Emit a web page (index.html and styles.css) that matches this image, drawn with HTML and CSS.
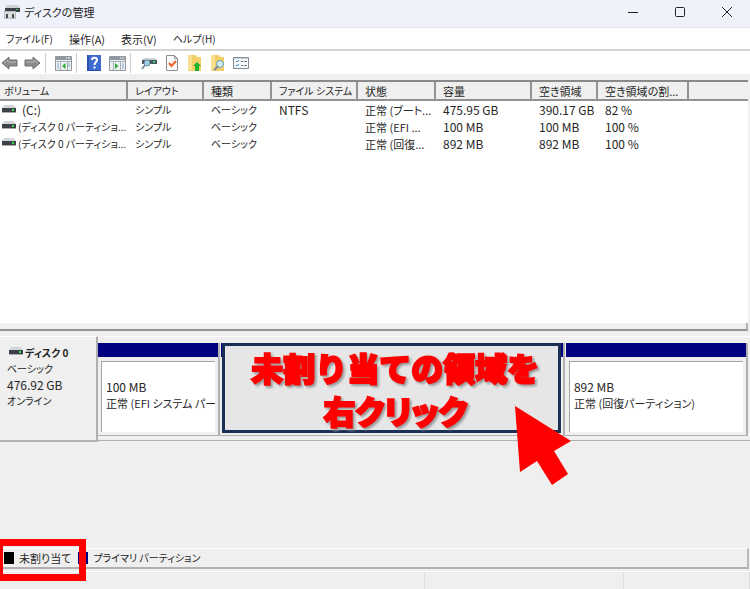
FILE: index.html
```html
<!DOCTYPE html>
<html lang="ja">
<head>
<meta charset="utf-8">
<title>ディスクの管理</title>
<link rel="stylesheet" href="styles.css">
</head>
<body>
<svg width="0" height="0" class="defs" aria-hidden="true">
  <symbol id="drive" viewBox="0 0 14 8">
    <path d="M2 0h10l2 3H0z" fill="#d4d7d9"/>
    <path d="M0 3h14v4H0z" fill="#3b4146"/>
    <path d="M0 7h14v1H0z" fill="#a9adb0"/>
    <path d="M10 4h2v2h-2z" fill="#35e04a"/>
  </symbol>
</svg>

<header class="titlebar">
  <svg class="app-icon" width="16" height="16" viewBox="0 0 16 16" aria-hidden="true">
    <path d="M3 1h11l2 3H1z" fill="#cfd2d4"/><path d="M1 4h15v4H1z" fill="#3b4146"/>
    <path d="M12 5h2v1h-2z" fill="#39d353"/>
    <path d="M0 7h12v8H0z" fill="#b9bbbd"/><path d="M1 8h10v6H1z" fill="#dcddde"/>
    <path d="M2 10h2v4H2zM8 10h2v4H8z" fill="#4a4d50"/>
  </svg>
  <h1>ディスクの管理</h1>
  <div class="window-buttons">
    <button type="button" aria-label="最小化"><svg width="12" height="12" viewBox="0 0 12 12"><path d="M1 6.500h10" /></svg></button>
    <button type="button" aria-label="最大化"><svg width="12" height="12" viewBox="0 0 12 12"><rect x="1.500" y="1.500" width="9" height="9" rx="1"/></svg></button>
    <button type="button" aria-label="閉じる"><svg width="12" height="12" viewBox="0 0 12 12"><path d="M1 1l10 10M11 1L1 11"/></svg></button>
  </div>
</header>

<nav class="menubar">
  <button type="button" class="kana">ファイル(F)</button>
  <button type="button">操作(A)</button>
  <button type="button">表示(V)</button>
  <button type="button" class="kana">ヘルプ(H)</button>
</nav>

<div class="toolbar">
  <div class="group">
    <button type="button" aria-label="戻る"><svg width="17" height="16" viewBox="0 0 17 16"><path d="M1 8l7-6v3h8v6H8v3z" fill="#8b8b8b" stroke="#6f6f6f"/><path d="M3 8l4-3v2h8" fill="none" stroke="#b5b5b5"/></svg></button>
    <button type="button" aria-label="進む"><svg width="17" height="16" viewBox="0 0 17 16"><path d="M16 8L9 2v3H1v6h8v3z" fill="#8b8b8b" stroke="#6f6f6f"/><path d="M14 8l-4-3v2H2" fill="none" stroke="#b5b5b5"/></svg></button>
  </div>
  <div class="group tree">
    <button type="button" aria-label="コンソール ツリーの表示"><svg width="17" height="16" viewBox="0 0 17 16"><path d="M.5 1.500h16v14H.5z" fill="#eef0f2" stroke="#92979c"/><path d="M1 2h15v3H1z" fill="#8f98a2"/><path d="M11 3h1M13 3h2" stroke="#fff"/><path d="M1 6.500h15M5.500 7v8M12.500 7v8" stroke="#a8afb6"/><path d="M2 9h2M2 11h2M2 13h2M13 9h2M13 11h2" stroke="#7faad0"/><path d="M10.500 8v6L7 11z" fill="#2eae36"/></svg></button>
  </div>
  <div class="group help">
    <button type="button" aria-label="ヘルプ"><svg width="14" height="16" viewBox="0 0 14 16"><path d="M0 0h14v16H0z" fill="#294fae"/><path d="M2 0h12v15H2z" fill="#3f6bd0"/><path d="M5 5c0-3 5-3 5 0 0 2-2.500 2-2.500 5M7.500 11.500v2" fill="none" stroke="#fff" stroke-width="2"/></svg></button>
    <button type="button" aria-label="操作ウィンドウの表示"><svg width="17" height="16" viewBox="0 0 17 16"><path d="M.5 1.500h16v14H.5z" fill="#eef0f2" stroke="#92979c"/><path d="M1 2h15v3H1z" fill="#8f98a2"/><path d="M11 3h1M13 3h2" stroke="#fff"/><path d="M1 6.500h15M4.500 7v8M11.500 7v8" stroke="#a8afb6"/><path d="M13 9h2M13 11h2M13 13h2" stroke="#7faad0"/><path d="M6 8v6l3.500-3z" fill="#2eae36"/></svg></button>
  </div>
  <div class="group actions">
    <button type="button" aria-label="最新の情報に更新"><svg width="16" height="16" viewBox="0 0 16 16"><path d="M3 3h11l2 2H1z" fill="#cbd0d3"/><path d="M1 5h15v4H1z" fill="#4a5560"/><path d="M12 6h2v2h-2z" fill="#36d867"/><circle cx="6" cy="8" r="3" fill="#9fd0e4" stroke="#62899b"/><path d="M4 10l-3 4" stroke="#8093a0" stroke-width="2"/></svg></button>
    <button type="button" aria-label="プロパティ"><svg width="14" height="16" viewBox="0 0 14 16"><path d="M1.500.5h8l3 3v12h-11z" fill="#fafafa" stroke="#8c8f92"/><path d="M9.500.5v3h3" fill="none" stroke="#8c8f92"/><path d="M4 8l2.500 3L11 6" fill="none" stroke="#ef622b" stroke-width="2"/></svg></button>
    <button type="button" aria-label="上へ"><svg width="15" height="16" viewBox="0 0 15 16"><path d="M1 0h8l1 2h4v14H1z" fill="#f3cf68"/><path d="M1 0h4v15H1z" fill="#f9df91"/><path d="M10 7l4 4h-2v5H8v-5H6z" fill="#20b22e"/></svg></button>
    <button type="button" aria-label="検索"><svg width="15" height="16" viewBox="0 0 15 16"><path d="M1 0h8l1 2h4v14H1z" fill="#f3cf68"/><path d="M1 0h4v15H1z" fill="#f9df91"/><circle cx="10" cy="9" r="3.500" fill="#d3edf7" stroke="#6c9cb4"/><path d="M8 11l-4 4" stroke="#7d8d97" stroke-width="2"/></svg></button>
    <button type="button" aria-label="表示設定"><svg width="16" height="16" viewBox="0 0 16 16"><path d="M.5 2.500h15v11H.5z" fill="#f7f8f9" stroke="#7f8b96"/><path d="M1 3h14" stroke="#929da7"/><path d="M3 6l1 1 2-2M3 10l1 1 2-2" fill="none" stroke="#288bd8"/><path d="M8 6.500h2M11 6.500h3M8 10.500h2M11 10.500h3" stroke="#6c7882"/></svg></button>
  </div>
</div>

<main>
  <section class="volumes">
    <table>
      <colgroup>
        <col class="c-volume"><col class="c-layout"><col class="c-type"><col class="c-fs"><col class="c-status"><col class="c-capacity"><col class="c-free"><col class="c-percent"><col>
      </colgroup>
      <thead>
        <tr><th class="kana">ボリューム</th><th class="kana">レイアウト</th><th>種類</th><th class="kana">ファイル システム</th><th>状態</th><th>容量</th><th>空き領域</th><th>空き領域の割...</th><th></th></tr>
      </thead>
      <tbody>
        <tr><td><svg class="drive spaced"><use href="#drive"/></svg>(C:)</td><td class="kana">シンプル</td><td class="kana">ベーシック</td><td>NTFS</td><td class="mixed">正常 (ブート...</td><td>475.95 GB</td><td>390.17 GB</td><td>82 %</td><td></td></tr>
        <tr><td class="kana"><svg class="drive"><use href="#drive"/></svg>(ディスク 0 パーティショ...</td><td class="kana">シンプル</td><td class="kana">ベーシック</td><td></td><td class="mixed">正常 (EFI ...</td><td>100 MB</td><td>100 MB</td><td>100 %</td><td></td></tr>
        <tr><td class="kana"><svg class="drive"><use href="#drive"/></svg>(ディスク 0 パーティショ...</td><td class="kana">シンプル</td><td class="kana">ベーシック</td><td></td><td class="mixed">正常 (回復...</td><td>892 MB</td><td>892 MB</td><td>100 %</td><td></td></tr>
      </tbody>
    </table>
  </section>
  <div class="splitter"></div>
  <section class="disks">
    <div class="disk">
      <div class="disk-label">
        <h2 class="kana"><svg class="drive"><use href="#drive"/></svg>ディスク 0</h2>
        <p class="kana">ベーシック</p><p>476.92 GB</p><p class="kana">オンライン</p>
      </div>
      <div class="partitions">
        <div class="partition efi"><div class="bar"></div><div class="info"><p>100 MB</p><p class="mixed">正常 (EFI システム パーティション)</p></div></div>
        <div class="partition primary"><div class="bar"></div><div class="info"></div>
          <div class="callout"><p>未割り当ての領域を</p><p class="tight">右クリック</p></div>
          <svg class="arrow" width="56" height="80" viewBox="0 0 56 80" aria-hidden="true"><path d="M0 0l56 35-17 10 14 23-16 11-15-24-17 11z" fill="#f00"/></svg>
        </div>
        <div class="partition recovery"><div class="bar"></div><div class="info"><p>892 MB</p><p class="mixed">正常 (回復パーティション)</p></div></div>
      </div>
    </div>
  </section>
</main>

<div class="legend">
  <span class="key mixed"><i class="swatch unallocated"></i>未割り当て</span>
  <span class="key kana"><i class="swatch"></i>プライマリ パーティション</span>
  <div class="highlight"></div>
</div>
<footer class="statusbar"><div></div><div></div><div></div></footer>
</body>
</html>
```
FILE: styles.css
```css
* { box-sizing: border-box; }

body {
  margin: 0;
  min-height: 100vh;
  display: flex;
  flex-direction: column;
  background: #efefef;
  color: #262626;
  font: 12px/16px "Noto Sans CJK JP", sans-serif;
  font-feature-settings: "palt";
  overflow: hidden;
}

h1, h2, p { margin: 0; font-size: inherit; font-weight: 400; }
button { border: 0; padding: 0; background: none; color: inherit; font: inherit; font-feature-settings: inherit; }
svg { display: block; }
.defs { position: absolute; }

.mixed, .titlebar h1, .menubar button, th { font-size: 11px; }
.kana, .menubar .kana, th.kana { font-size: 10px; }

.titlebar {
  display: flex;
  align-items: center;
  height: 28px;
  padding: 0 0 4px 4px;
  gap: 4px;
  background: #eff2fa;
  border-bottom: 1px solid #e3e5ea;
}
.titlebar h1 { flex: 1; }
.window-buttons { display: flex; }
.window-buttons button { width: 47px; height: 24px; display: grid; place-items: center; }
.window-buttons svg { fill: none; stroke: #222; }

.menubar {
  display: flex;
  gap: 16px;
  height: 23px;
  padding: 0 6px;
  background: #fff;
  border-bottom: 2px solid #d4d4d4;
}

.toolbar {
  display: flex;
  align-items: center;
  height: 23px;
  background: #fff;
}
.group { display: flex; align-items: center; height: 20px; padding: 0 7px; gap: 7px; border-left: 1px solid #ccc; }
.group:first-child { border: 0; padding: 0 4px 0 1px; gap: 6px; }
.tree { padding: 0 4px 0 9px; }
.help { padding: 0 4px 0 10px; gap: 8px; }
.actions { padding-left: 10px; gap: 8px; }

main { flex: 1; display: flex; flex-direction: column; padding-top: 6px; }

.volumes {
  flex: 245 1 0px;
  background: #fff;
  border-top: 2px solid #8a8a8a;
  margin-right: 2px;
}
table { width: 100%; table-layout: fixed; border-collapse: separate; border-spacing: 0; }
th, td { padding: 0 0 0 7px; height: 17px; text-align: left; font-weight: 400; white-space: nowrap; }
th:first-child { padding-left: 4px; }
td:first-child { padding-left: 2px; }
th { height: 19px; background: #efefef; border-right: 2px solid #929292; border-bottom: 2px solid #929292; }
th:last-child { border-right: 0; }
.c-volume { width: 128px; }
.c-layout { width: 76px; }
.c-type { width: 68px; }
.c-fs { width: 86px; }
.c-status { width: 78px; }
.c-capacity { width: 96px; }
.c-free { width: 66px; }
.c-percent { width: 91px; }

.drive { display: inline-block; width: 14px; height: 8px; margin-right: 2px; vertical-align: 2px; }
.spaced { margin-right: 6px; }

.splitter { height: 8px; margin-right: 2px; border-bottom: 2px solid #929292; border-right: 2px solid #b0b0b0; background: #efefef; }

.disks { flex: 215 1 0px; padding-top: 5px; }
.disk { display: flex; height: 106px; }
.disk-label { width: 98px; padding: 8px 7px; border-top: 1px solid #fff; border-right: 2px solid #b0b0b0; border-bottom: 2px solid #b0b0b0; }
.disk-label h2 { font-weight: 700; }
.disk-label .drive { margin: 0 2px; }
.partitions { flex: 1; display: flex; height: 105px; padding: 6px 2px 4px 0; border-top: 1px solid #fff; border-bottom: 1px solid #b0b0b0; }
.partition { display: flex; flex-direction: column; border-right: 2px solid #b0b0b0; border-bottom: 1px solid #b0b0b0; min-width: 0; }
.efi { flex: 121; }
.primary { flex: 346; position: relative; padding-left: 1px; }
.recovery { flex: 182; padding-left: 1px; }
.bar { height: 14px; background: #000080; }
.info {
  flex: 1;
  margin: 4px 3px 3px;
  padding: 17px 0 0 4px;
  background: #fff;
  border-top: 1px solid #a5a5a5;
  border-left: 1px solid #a5a5a5;
  overflow: hidden;
  white-space: nowrap;
}

.callout {
  position: absolute;
  inset: 0 2px 2px 2px;
  padding-left: 8px;
  background: #e6e6e6;
  border: 3px solid #1b2f55;
  color: #f00;
  font-size: 32px;
  line-height: 43px;
  font-weight: 900;
  text-align: center;
  white-space: nowrap;
  font-feature-settings: normal;
  -webkit-text-stroke: 2px #f00;
}
.callout p { font-weight: inherit; filter: drop-shadow(2px 2px 1px #999); }
.callout .tight { font-feature-settings: "palt"; }
.arrow { position: absolute; right: -8px; top: 63px; z-index: 2; }

.legend {
  position: relative;
  display: flex;
  align-items: center;
  gap: 7px;
  height: 21px;
  margin: 0 1px 2px 0;
  padding-left: 4px;
  border-top: 1px solid #fff;
  border-right: 2px solid #b8b8b8;
  border-bottom: 2px solid #b0b0b0;
}
.key { display: flex; align-items: center; gap: 5px; }
.swatch { width: 10px; height: 12px; background: #000080; }
.unallocated { background: #000; }
.highlight { position: absolute; left: -4px; top: -10px; width: 90px; height: 42px; border: 7px solid #f00; }

.statusbar { display: flex; height: 18px; border-top: 1px solid #fff; }
.statusbar div { flex: 198; border-right: 1px solid #dedede; }
.statusbar div:first-child { flex: 426; }
.statusbar div:last-child { flex: 126; }
```
